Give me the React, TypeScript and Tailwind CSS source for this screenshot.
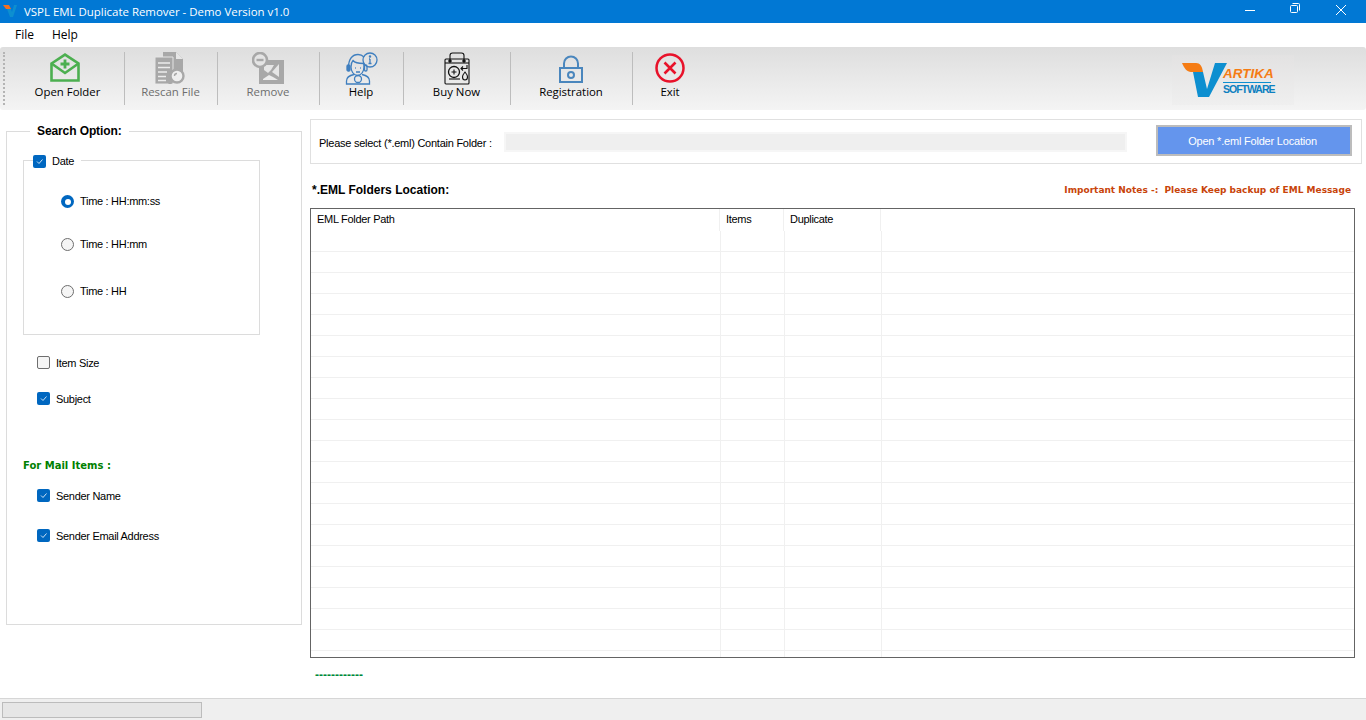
import type { ReactNode } from "react";

const sans = "font-['Liberation_Sans',Arial,sans-serif]";
const segoe = "font-['Open_Sans','Noto_Sans',sans-serif]";

const OpenFolderIcon = () => (
  <svg width="30" height="29" viewBox="0 0 30 29" fill="none" stroke="#4caf50" strokeWidth="2.6">
    <path d="M1.5 10.5 15 1.6l13.5 8.9v17H1.5z" />
    <path d="M1.5 10.5 15 20l13.5-9.5" />
    <path d="M15 6.5v9M10.5 11h9" strokeWidth="2.8" />
  </svg>
);

const RescanIcon = () => (
  <svg width="31" height="32" viewBox="0 0 31 32">
    <path d="M8 0h13l7 7v13H8z" fill="#a8a8a8" />
    <path d="M21 0v7h7" fill="#e6e6e6" />
    <path d="M0 5h18v27H0z" fill="#a8a8a8" stroke="#e4e4e4" strokeWidth="1" />
    <path d="M3 11h12M3 15.5h12M3 20h9M3 24.5h8M3 28.5h8" stroke="#ececec" strokeWidth="1.6" />
    <circle cx="22" cy="24" r="6.5" fill="#efefef" stroke="#a8a8a8" strokeWidth="2.4" />
    <path d="M17 29l-3 3" stroke="#a8a8a8" strokeWidth="3" />
    <path d="M19.5 24a2.5 2.5 0 0 1 2.5-2.5" stroke="#a8a8a8" strokeWidth="1.4" fill="none" />
  </svg>
);

const RemoveIcon = () => (
  <svg width="33" height="33" viewBox="0 0 33 33">
    <path d="M7 8h25v24H7z" fill="#a8a8a8" />
    <path d="M12 13h10l-3 5-3 3-4-3z" fill="#e6e6e6" />
    <path d="M27 12v13l-7-5z" fill="#e6e6e6" />
    <path d="M11 27l6-4 4 2 5 3H11z" fill="#ececec" />
    <circle cx="8" cy="8" r="7" fill="#e4e4e4" stroke="#a8a8a8" strokeWidth="2.6" />
    <path d="M4.5 8h7" stroke="#a8a8a8" strokeWidth="2.4" />
  </svg>
);

const HelpIcon = () => (
  <svg width="33" height="33" viewBox="0 0 33 33" fill="none" stroke="#3f7fbf" strokeWidth="1.3">
    <circle cx="25" cy="8" r="7" />
    <path d="M25 7v4.5M23.5 11.5h3M24 7h1" />
    <circle cx="25" cy="4.6" r=".6" fill="#3f7fbf" />
    <path d="M3.5 15c0-8 4-12.5 9.5-12.5 2.5 0 4.5 1 6 2.5" />
    <path d="M6 15c0-3 .5-5 2-6.5 2 2.5 6 3 10.5 3 .5 1 .5 2.5 .5 3.5 0 4-2.500 8.500-6.500 8.500S6 19 6 15z" />
    <rect x="2" y="13" width="3" height="6" rx="1.2" fill="#3f7fbf" />
    <rect x="19.5" y="13" width="2.5" height="6" rx="1.2" />
    <path d="M10 16h.8M15 16h.8M11 20h4" />
    <path d="M9 22.5c-4 .8-7.5 3-7.5 6.5v3h23v-3c0-3.5-3.5-5.7-7.5-6.500" />
    <circle cx="13" cy="27" r="3.5" />
  </svg>
);

const BuyNowIcon = () => (
  <svg width="26" height="33" viewBox="0 0 26 33" fill="none" stroke="#111" strokeWidth="1.1">
    <rect x="1" y="7" width="24" height="25" rx="1" />
    <path d="M1 11h24" />
    <path d="M6 9V3.5C6 2 7 1 8.5 1h9C19 1 20 2 20 3.5V9" />
    <circle cx="6" cy="9" r="1.2" fill="#111" />
    <circle cx="20" cy="9" r="1.2" fill="#111" />
    <circle cx="10" cy="20" r="5.5" strokeWidth="1.3" />
    <path d="M7.5 20h5M10 17.5v5" />
    <path d="M23 13v3.5h-6M19 14.5l-2 2 2 2" />
    <path d="M21 20s2.5 3 2.5 5-1 3-2.5 3-2.5-1-2.5-3 2.5-5 2.500-5z" />
    <path d="M5 27h11" />
  </svg>
);

const LockIcon = () => (
  <svg width="24" height="28" viewBox="0 0 24 28" fill="none" stroke="#4a86bd" strokeWidth="2">
    <rect x="1" y="13" width="22" height="14" />
    <path d="M5 13V8.5a7 7 0 0 1 14 0V13" />
    <circle cx="12" cy="20" r="3" />
  </svg>
);

const ExitIcon = () => (
  <svg width="30" height="30" viewBox="0 0 30 30" fill="none" stroke="#e8122a">
    <circle cx="15" cy="15" r="13.5" strokeWidth="2.5" />
    <path d="M9.5 9.5l11 11M20.5 9.5l-11 11" strokeWidth="2.6" />
  </svg>
);

const tools: { label: string; icon: ReactNode; className: string; disabled?: boolean }[] = [
  { label: "Open Folder", icon: <OpenFolderIcon />, className: "w-[113px] pt-[6px] pr-[2px]" },
  { label: "Rescan File", icon: <RescanIcon />, className: "w-[93px] pt-[5px] pr-[2px]", disabled: true },
  { label: "Remove", icon: <RemoveIcon />, className: "w-[102px] pt-[5px] pr-[2px]", disabled: true },
  { label: "Help", icon: <HelpIcon />, className: "w-[84px] pt-[5px] pr-[2px]" },
  { label: "Buy Now", icon: <BuyNowIcon />, className: "w-[107px] pt-[5px] pr-[2px]" },
  { label: "Registration", icon: <LockIcon />, className: "w-[122px] pt-[8px] pr-[2px]" },
  { label: "Exit", icon: <ExitIcon />, className: "w-[74px] pt-[6px]" },
];

const Checkbox = ({ checked }: { checked: boolean }) =>
  checked ? (
    <span className="flex size-[13px] shrink-0 items-center justify-center rounded-[2px] bg-[#0067c0]">
      <svg width="9" height="9" viewBox="0 0 9 9" fill="none" stroke="#cfe3f5" strokeWidth="1">
        <path d="M2 4.5l2 2 3.5-4" />
      </svg>
    </span>
  ) : (
    <span className="size-[13px] shrink-0 rounded-[2px] border border-[#6e6e6e] bg-[#f5f5f5]" />
  );

const Radio = ({ checked }: { checked: boolean }) =>
  checked ? (
    <span className="flex size-[13px] shrink-0 items-center justify-center rounded-full bg-[#0067c0]">
      <span className="size-[6px] rounded-full bg-white" />
    </span>
  ) : (
    <span className="size-[13px] shrink-0 rounded-full border border-[#6e6e6e] bg-[#f5f5f5]" />
  );

const CheckRow = ({ label, checked, className }: { label: string; checked: boolean; className: string }) => (
  <div className={`flex h-[13px] items-center gap-[6px] pl-[30px] ${className}`}>
    <Checkbox checked={checked} />
    <span className="pt-px text-[11px] tracking-[-0.3px] text-black">{label}</span>
  </div>
);

const RadioRow = ({ label, checked, className }: { label: string; checked: boolean; className: string }) => (
  <div className={`flex h-[13px] items-center gap-[6px] pl-[37px] ${className}`}>
    <Radio checked={checked} />
    <span className="text-[11px] tracking-[-0.3px] text-black">{label}</span>
  </div>
);

const TableRow = ({ className }: { className: string }) => (
  <div className={`flex ${className}`}>
    <div className="w-[410px] border-r border-[#f0f0f0]" />
    <div className="w-[64px] border-r border-[#f0f0f0]" />
    <div className="w-[97px] border-r border-[#f0f0f0]" />
  </div>
);

const rows = Array.from({ length: 20 }, (_, i) => i);

const App = () => {
  return (
    <div className={`flex h-[720px] w-[1366px] flex-col overflow-hidden bg-white ${sans}`}>
      <div className="flex h-[23px] shrink-0 items-center bg-[#0178d4] text-white">
        <svg className="mb-[3px] ml-[3px]" width="14" height="13" viewBox="0 0 14 13">
          <path d="M0 1h6l2 4H3z" fill="#f37021" />
          <path d="M4 5h4l1 3 2-7h3l-4 12H7z" fill="#0d8fd0" />
        </svg>
        <span className={`ml-[7px] text-[11.45px] ${segoe}`}>VSPL EML Duplicate Remover - Demo Version v1.0</span>
        <div className="ml-auto flex items-center">
          <svg className="mb-[3px] mr-[35px]" width="10" height="10" viewBox="0 0 10 10" stroke="white" strokeWidth="1">
            <path d="M0 5.5h10" />
          </svg>
          <svg className="mb-[7px] mr-[36px]" width="10" height="10" viewBox="0 0 10 10" fill="none" stroke="white" strokeWidth="1">
            <rect x=".5" y="2.5" width="7" height="7" rx="1" />
            <path d="M2.5 .5h6a1 1 0 0 1 1 1v6" />
          </svg>
          <svg className="mb-[3px] mr-[20px]" width="10" height="10" viewBox="0 0 10 10" stroke="white" strokeWidth="1">
            <path d="M0 0l10 10M10 0L0 10" />
          </svg>
        </div>
      </div>

      <div className={`flex h-[24px] shrink-0 items-center gap-[18px] pl-[15px] text-[12px] text-black ${segoe}`}>
        <span>File</span>
        <span>Help</span>
      </div>

      <div className="flex h-[63px] shrink-0 items-stretch rounded-[3px] bg-gradient-to-b from-[#dedede] to-[#f4f4f4]">
        <div className="my-[5px] ml-[3px] mr-[7px] w-[2px] border-l-2 border-dotted border-[#b4b4b4]" />
        {tools.map((tool, i) => (
          <div key={tool.label} className={`relative flex shrink-0 flex-col items-center ${tool.className}`}>
            <div className={`flex h-[30px] items-start justify-center ${i === 0 ? "-ml-[6px]" : ""}`}>{tool.icon}</div>
            <span className={`absolute top-[36px] text-[11.4px] ${segoe} ${tool.disabled ? "text-[#6d6d6d]" : "text-black"}`}>
              {tool.label}
            </span>
            {i < tools.length - 1 ? (
              <span className="absolute right-0 top-[5px] h-[53px] w-px bg-[#bdbdbd]" />
            ) : null}
          </div>
        ))}
        <div className="ml-[465px] mt-[8px] flex h-[50px] w-[122px] shrink-0 items-center bg-gradient-to-b from-[#e3e2e2] to-[#efefef] pl-[10px]">
          <svg width="46" height="36" viewBox="0 0 46 36" className="shrink-0">
            <path d="M0 1h14c4 0 6 3 7 9H9C5 10 2 6 0 1z" fill="#f57c14" />
            <path d="M11 10h10l4 17 8-26h12L27 35H16z" fill="#0d8fd0" />
          </svg>
          <div className="-ml-[5px] flex w-[52px] flex-col">
            <span className="text-[13.5px] font-bold italic leading-[13px] text-[#f57c14]">ARTIKA</span>
            <span className="mt-[2px] w-[48px] whitespace-nowrap border-t border-[#0d8fd0] pt-[1px] text-[10.5px] font-bold leading-[10px] tracking-[-1px] text-[#0d80c0]">
              SOFTWARE
            </span>
          </div>
        </div>
      </div>

      <div className="flex min-h-0 flex-1">
        <div className="w-[304px] shrink-0 pl-[6px] pt-[13px]">
          <fieldset className="h-[502px] w-[296px] border border-[#dcdcdc]">
            <legend className="ml-[23px] px-[7px] text-[12px] font-bold leading-[16px] tracking-[-0.1px] text-black">
              Search Option:
            </legend>
            <fieldset className="ml-[16px] mt-[16px] h-[180px] w-[237px] border border-[#dcdcdc]">
              <legend className="ml-[9px] flex h-[11px] items-start gap-[6px] pr-[7px]">
                <Checkbox checked />
                <span className="text-[11px] leading-[13px] tracking-[-0.3px] text-black">Date</span>
              </legend>
              <RadioRow label="Time : HH:mm:ss" checked className="mt-[29px]" />
              <RadioRow label="Time : HH:mm" checked={false} className="mt-[30px]" />
              <RadioRow label="Time : HH" checked={false} className="mt-[34px]" />
            </fieldset>
            <CheckRow label="Item Size" checked={false} className="mt-[21px]" />
            <CheckRow label="Subject" checked className="mt-[23px]" />
            <p className="ml-[16px] mt-[54px] font-['DejaVu_Sans',sans-serif] text-[10px] font-bold leading-[14px] text-[#008000]">
              For Mail Items :
            </p>
            <CheckRow label="Sender Name" checked className="mt-[16px]" />
            <CheckRow label="Sender Email Address" checked className="mt-[27px]" />
          </fieldset>
        </div>

        <div className="ml-[6px] flex w-[1056px] flex-col pt-[9px]">
          <div className="flex h-[45px] w-[1052px] items-center border border-[#e0e0e0] pl-[8px]">
            <span className="w-[185px] shrink-0 pt-[3px] text-[11px] tracking-[-0.25px] text-black">
              Please select (*.eml) Contain Folder :
            </span>
            <div className="h-[20px] w-[623px] shrink-0 border-2 border-[#f6f6f6] bg-[#efefef]" />
            <button className="mb-[2px] ml-[29px] h-[31px] w-[196px] shrink-0 border-2 border-[#bcbcbc] bg-[#6495ed] pr-[3px] pt-[1px] text-[11px] tracking-[-0.2px] text-white">
              Open *.eml Folder Location
            </button>
          </div>

          <div className="mr-[15px] mt-[17px] flex h-[18px] items-center justify-between pl-[2px]">
            <span className="text-[12px] font-bold text-black">*.EML Folders Location:</span>
            <span className="whitespace-pre pt-[2px] font-['DejaVu_Sans',sans-serif] text-[9px] font-bold text-[#c8440a]">
              Important Notes -:  Please Keep backup of EML Message
            </span>
          </div>

          <div className="mr-[11px] mt-[9px] flex h-[450px] flex-col border border-[#646464]">
            <div className="flex h-[22px] shrink-0 text-[11px] tracking-[-0.3px] text-black">
              <div className="flex w-[409px] items-center border-r border-[#f0f0f0] pb-[2px] pl-[6px]">EML Folder Path</div>
              <div className="flex w-[64px] items-center border-r border-[#f0f0f0] pb-[2px] pl-[6px]">Items</div>
              <div className="flex w-[97px] items-center border-r border-[#f0f0f0] pb-[2px] pl-[6px]">Duplicate</div>
            </div>
            {rows.map((row) => (
              <TableRow key={row} className="h-[21px] shrink-0 border-b border-[#f0f0f0]" />
            ))}
            <TableRow className="flex-1" />
          </div>

          <span className="ml-[5px] mt-[10px] text-[12px] font-bold leading-[14px] text-[#008a3c]">------------</span>
        </div>
      </div>

      <div className="flex h-[22px] shrink-0 items-center border-t border-[#d6d6d6] bg-[#efefef] pl-[2px]">
        <div className="h-[16px] w-[200px] border border-[#bcbcbc] bg-[#e6e6e6]" />
      </div>
    </div>
  );
};

export default App;
